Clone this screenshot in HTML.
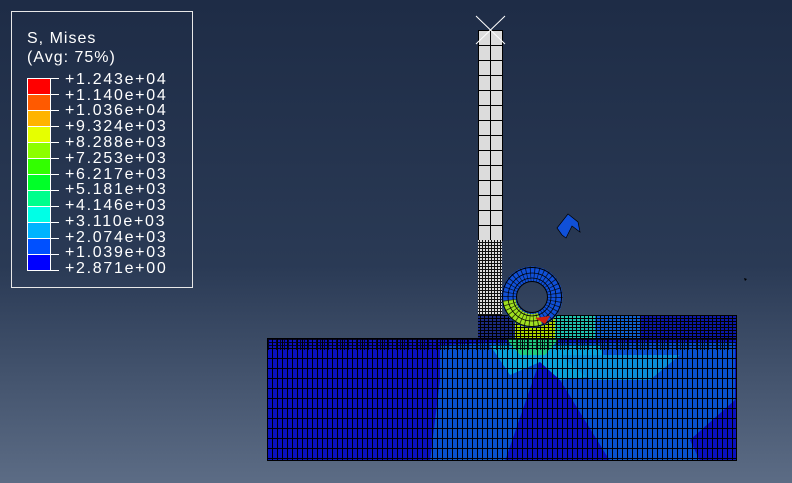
<!DOCTYPE html><html><head><style>
html,body{margin:0;padding:0}
body{width:792px;height:483px;overflow:hidden;background:linear-gradient(#1e2c46 0%,#2a3a55 55%,#5c6c85 100%);font-family:"Liberation Sans",sans-serif;position:relative}
#leg{position:absolute;left:11px;top:11px;width:180px;height:275px;border:1px solid #e8e8e8;color:#fff}
</style></head><body>
<div id="leg"></div>
<svg width="792" height="483" style="position:absolute;left:0;top:0">
<defs>
<pattern id="g2" width="5" height="10" patternUnits="userSpaceOnUse" x="267" y="338"><path d="M0 0.5H5M0.5 0V10" stroke="#000" stroke-width="1" fill="none"/></pattern>
<pattern id="g3" width="4" height="3" patternUnits="userSpaceOnUse"><path d="M0 0.5H4M0.5 0V3" stroke="#000" stroke-width="1" fill="none"/></pattern>
<pattern id="dots" width="3" height="3" patternUnits="userSpaceOnUse"><rect width="3" height="3" fill="#111"/><rect width="2" height="2" fill="#ddd"/></pattern>
</defs>
<g font-size="16" fill="#fff" font-family="Liberation Sans" letter-spacing="1">
<text x="27" y="43">S, Mises</text>
<text x="27" y="62">(Avg: 75%)</text>
</g>
<g stroke="#fff" stroke-width="1">
<rect x="27.5" y="78.5" width="23" height="16" fill="#ff0000"/>
<rect x="27.5" y="94.5" width="23" height="16" fill="#ff5a00"/>
<rect x="27.5" y="110.5" width="23" height="16" fill="#ffb400"/>
<rect x="27.5" y="126.5" width="23" height="16" fill="#e6ff00"/>
<rect x="27.5" y="142.5" width="23" height="16" fill="#8cff00"/>
<rect x="27.5" y="158.5" width="23" height="16" fill="#32ff00"/>
<rect x="27.5" y="174.5" width="23" height="16" fill="#00ff28"/>
<rect x="27.5" y="190.5" width="23" height="16" fill="#00ff8c"/>
<rect x="27.5" y="206.5" width="23" height="16" fill="#00ffe6"/>
<rect x="27.5" y="222.5" width="23" height="16" fill="#00b4ff"/>
<rect x="27.5" y="238.5" width="23" height="16" fill="#0050ff"/>
<rect x="27.5" y="254.5" width="23" height="16" fill="#0000ff"/>
</g>
<g fill="#fff" font-size="16" letter-spacing="1.7">
<text x="65" y="84">+1.243e+04</text><text x="65" y="100">+1.140e+04</text><text x="65" y="115">+1.036e+04</text><text x="65" y="131">+9.324e+03</text><text x="65" y="147">+8.288e+03</text><text x="65" y="163">+7.253e+03</text><text x="65" y="179">+6.217e+03</text><text x="65" y="194">+5.181e+03</text><text x="65" y="210">+4.146e+03</text><text x="65" y="226">+3.110e+03</text><text x="65" y="242">+2.074e+03</text><text x="65" y="257">+1.039e+03</text><text x="65" y="273">+2.871e+00</text>
</g>
<g stroke="#fff" stroke-width="1">
<line x1="51" y1="78.5" x2="59" y2="78.5"/><line x1="51" y1="94.5" x2="59" y2="94.5"/><line x1="51" y1="110.5" x2="59" y2="110.5"/><line x1="51" y1="126.5" x2="59" y2="126.5"/><line x1="51" y1="142.5" x2="59" y2="142.5"/><line x1="51" y1="158.5" x2="59" y2="158.5"/><line x1="51" y1="174.5" x2="59" y2="174.5"/><line x1="51" y1="190.5" x2="59" y2="190.5"/><line x1="51" y1="206.5" x2="59" y2="206.5"/><line x1="51" y1="222.5" x2="59" y2="222.5"/><line x1="51" y1="238.5" x2="59" y2="238.5"/><line x1="51" y1="254.5" x2="59" y2="254.5"/><line x1="51" y1="270.5" x2="59" y2="270.5"/>
</g>
<!-- column -->
<rect x="478.5" y="30.5" width="24" height="210" fill="#dcdcdc" stroke="#000"/>
<line x1="490.5" y1="30" x2="490.5" y2="240" stroke="#000"/>
<g stroke="#000"><path d="M478 45.5H503M478 60.5H503M478 75.5H503M478 90.5H503M478 105.5H503M478 120.5H503M478 135.5H503M478 150.5H503M478 165.5H503M478 180.5H503M478 195.5H503M478 210.5H503M478 225.5H503"/></g>
<path d="M476 16L505 44M505 16L476 44" stroke="#fff" stroke-width="1"/>
<rect x="478" y="240" width="24" height="96" fill="url(#dots)"/>
<!-- upper right block -->
<rect x="478" y="315" width="259" height="23" fill="#1a2a80"/>
<rect x="515" y="315" width="40" height="23" fill="#b0d800"/>
<rect x="555" y="315" width="40" height="23" fill="#20c0b0"/>
<rect x="595" y="315" width="45" height="23" fill="#1060d0"/>
<rect x="640" y="315" width="97" height="23" fill="#0a18a8"/>
<rect x="478" y="315" width="259" height="23" fill="url(#g3)"/>
<!-- lower block -->
<rect x="267" y="338" width="470" height="123" fill="#0a10c0"/>
<path d="M440 345L520 342L735 342L735 400L690 440L700 461L610 461L560 380L540 360L505 461L430 461L440 380Z" fill="#0850d0"/>
<path d="M490 345L600 345L610 375L560 380L540 362L510 375Z" fill="#0aa0d8"/>
<path d="M560 355L680 355L650 380L590 380Z" fill="#0a8cd8"/>
<path d="M505 338L560 338L545 355L520 355Z" fill="#20c880"/>
<rect x="267" y="338" width="470" height="123" fill="url(#g2)"/>
<rect x="267" y="338" width="470" height="12" fill="url(#g3)" opacity="0.8"/>
<rect x="267.5" y="338.5" width="469" height="122" fill="none" stroke="#000"/>
<!-- ring -->
<circle cx="532" cy="297" r="23" fill="none" stroke="#1050d8" stroke-width="15"/>
<path d="M509 300A23 23 0 0 0 540 319" fill="none" stroke="#a0e020" stroke-width="13"/>
<circle cx="532" cy="297" r="19" fill="none" stroke="#000" stroke-width="0.8"/>
<circle cx="532" cy="297" r="24" fill="none" stroke="#000" stroke-width="0.8"/>
<circle cx="532" cy="297" r="29.5" fill="none" stroke="#000" stroke-width="1"/>
<circle cx="532" cy="297" r="15.5" fill="none" stroke="#000" stroke-width="1"/>
<circle cx="532" cy="297" r="23" fill="none" stroke="#000" stroke-width="15" stroke-dasharray="0.8 3" opacity="0.7"/>
<path d="M535 318L550 316L545 324Z" fill="#d02010"/>
<!-- fragment -->
<path d="M557 228L568 214L578 222L580 232L572 226L566 238L562 235Z" fill="#1050d8" stroke="#000" stroke-width="0.7"/>
<path d="M744 278l3 1l-2 2z" fill="#000"/>
</svg>
</body></html>
